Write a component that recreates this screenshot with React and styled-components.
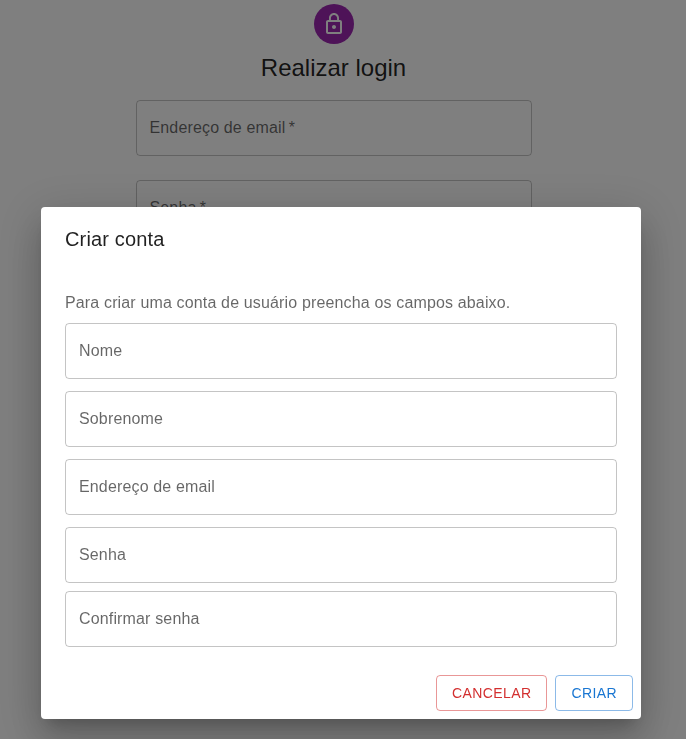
import React from "react";
import styled, { createGlobalStyle } from "styled-components";

const GlobalStyle = createGlobalStyle`
  *, *::before, *::after { box-sizing: border-box; }
  body {
    margin: 0;
    overflow: hidden;
    background: #fff;
    color: rgba(0, 0, 0, 0.87);
    font-family: "Liberation Sans", Arial, sans-serif;
    font-size: 16px;
    line-height: 1.5;
    letter-spacing: 0.15008px;
    -webkit-font-smoothing: antialiased;
  }
`;

const LoginPage = styled.main`
  width: 396px;
  height: 739px;
  margin-left: 135.5px;
  padding-top: 4px;
  display: flex;
  flex-direction: column;
  align-items: center;
  overflow: hidden;
`;

const Avatar = styled.div`
  width: 40px;
  height: 40px;
  flex: none;
  border-radius: 50%;
  background: #9c27b0;
  color: #fff;
  display: flex;
  align-items: center;
  justify-content: center;
  svg { width: 24px; height: 24px; fill: currentColor; }
`;

const PageTitle = styled.h1`
  margin: 8px 0 0;
  font-size: 24px;
  font-weight: 400;
  line-height: 32px;
  letter-spacing: 0;
`;

const LoginFields = styled.div`
  width: 100%;
  margin-top: 16px;
  display: flex;
  flex-direction: column;
  gap: 24px;
`;

const Field = styled.label`
  height: 56px;
  flex: none;
  padding: 0 13px;
  display: flex;
  align-items: center;
  border: 1px solid rgba(0, 0, 0, 0.23);
  border-radius: 4px;
  color: rgba(0, 0, 0, 0.6);
  line-height: 24px;
  margin-top: ${({ $gap = 0 }) => $gap}px;
`;

const Backdrop = styled.div`
  position: fixed;
  inset: 0;
  background: rgba(0, 0, 0, 0.5);
  padding: 207px 45px 20px 41px;
`;

const Dialog = styled.section`
  width: 600px;
  height: 512px;
  display: flex;
  flex-direction: column;
  background: #fff;
  border-radius: 4px;
  box-shadow: 0 11px 15px -7px rgba(0, 0, 0, 0.2),
    0 24px 38px 3px rgba(0, 0, 0, 0.14), 0 9px 46px 8px rgba(0, 0, 0, 0.12);
`;

const DialogTitle = styled.h2`
  margin: 0;
  padding: 16px 24px;
  font-size: 20px;
  font-weight: 500;
  line-height: 32px;
`;

const DialogContent = styled.div`
  padding: 20px 24px;
  display: flex;
  flex-direction: column;
`;

const Description = styled.p`
  margin: 0;
  color: rgba(0, 0, 0, 0.6);
  line-height: 24px;
`;

const DialogActions = styled.footer`
  margin-top: auto;
  padding: 8px;
  display: flex;
  justify-content: flex-end;
  gap: 8px;
`;

const ActionButton = styled.button`
  height: 36px;
  padding: 5px 15px;
  background: transparent;
  border: 1px solid ${({ $border }) => $border};
  border-radius: 4px;
  color: ${({ $color }) => $color};
  font: 500 14px/24px "Liberation Sans", Arial, sans-serif;
  letter-spacing: 0.39998px;
  text-transform: uppercase;
`;

const accountFields = [
  { label: "Nome", gap: 8 },
  { label: "Sobrenome", gap: 12 },
  { label: "Endereço de email", gap: 12 },
  { label: "Senha", gap: 12 },
  { label: "Confirmar senha", gap: 8 },
];

export default function App() {
  return (
    <>
      <GlobalStyle />
      <LoginPage>
        <Avatar>
          <svg viewBox="0 0 24 24" aria-hidden="true">
            <path d="M12 17c1.1 0 2-.9 2-2s-.9-2-2-2-2 .9-2 2 .9 2 2 2zm6-9h-1V6c0-2.76-2.24-5-5-5S7 3.24 7 6v2H6c-1.1 0-2 .9-2 2v10c0 1.1.9 2 2 2h12c1.1 0 2-.9 2-2V10c0-1.1-.9-2-2-2zM8.9 6c0-1.71 1.39-3.1 3.1-3.1s3.1 1.39 3.1 3.1v2H8.9V6zM18 20H6V10h12v10z" />
          </svg>
        </Avatar>
        <PageTitle>Realizar login</PageTitle>
        <LoginFields>
          <Field>Endereço de email&thinsp;*</Field>
          <Field>Senha&thinsp;*</Field>
        </LoginFields>
      </LoginPage>
      <Backdrop>
        <Dialog role="dialog" aria-label="Criar conta">
          <DialogTitle>Criar conta</DialogTitle>
          <DialogContent>
            <Description>Para criar uma conta de usuário preencha os campos abaixo.</Description>
            {accountFields.map(({ label, gap }) => (
              <Field key={label} $gap={gap}>{label}</Field>
            ))}
          </DialogContent>
          <DialogActions>
            <ActionButton $color="#d32f2f" $border="rgba(211, 47, 47, 0.5)">Cancelar</ActionButton>
            <ActionButton $color="#1976d2" $border="rgba(25, 118, 210, 0.5)">Criar</ActionButton>
          </DialogActions>
        </Dialog>
      </Backdrop>
    </>
  );
}
